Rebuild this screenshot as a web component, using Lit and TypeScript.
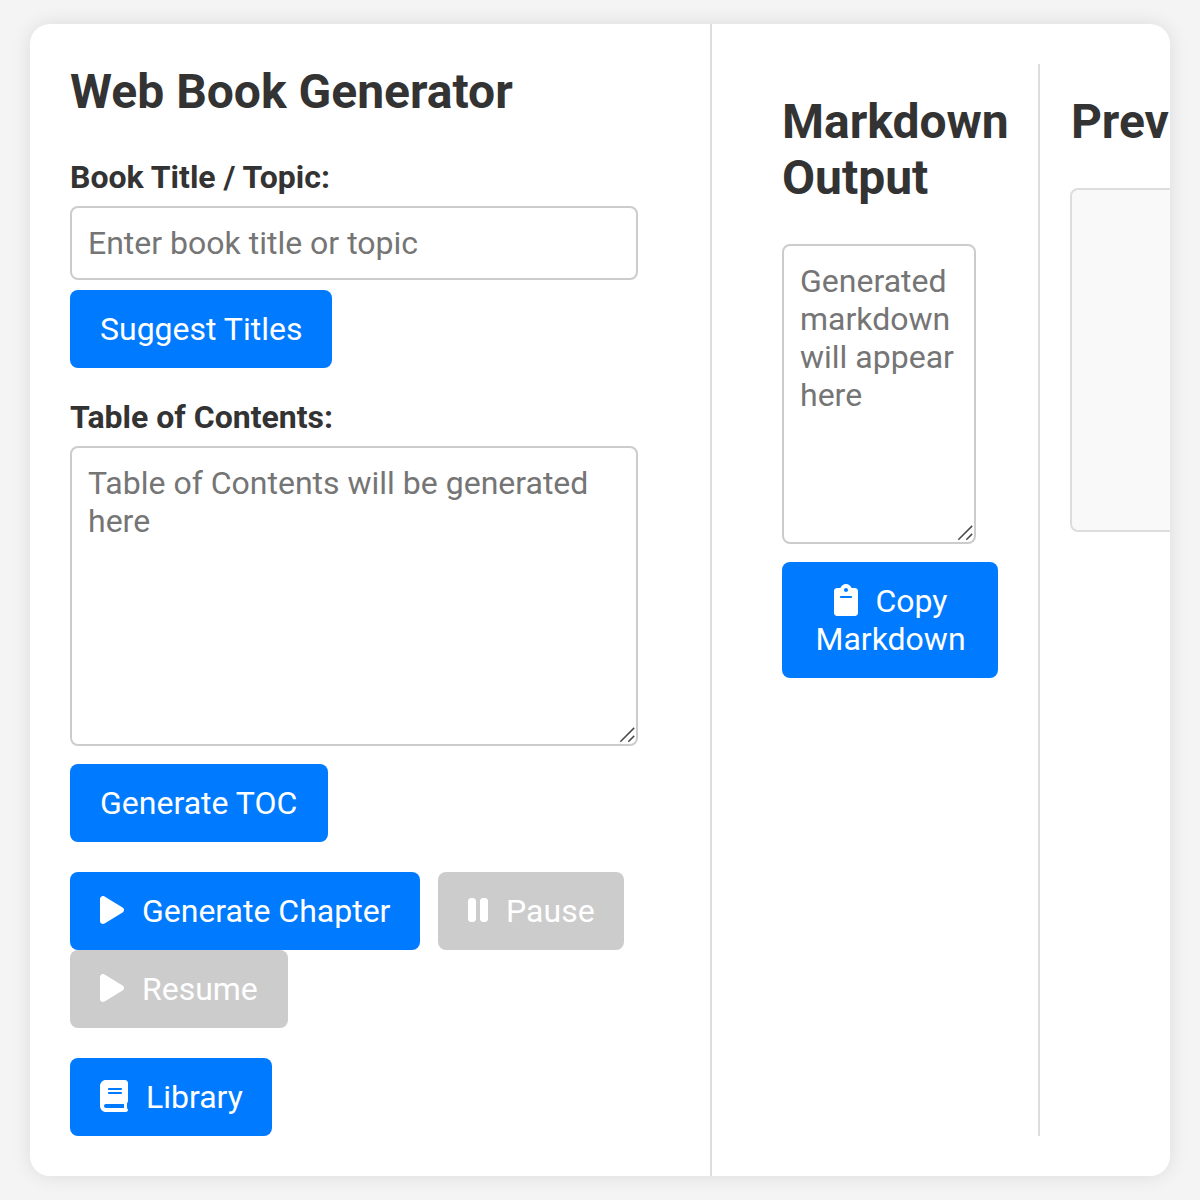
import { LitElement, html, css, svg } from "lit";
import { customElement, property } from "lit/decorators.js";

type IconName = "play" | "pause" | "book" | "clipboard";

const ICONS: Record<IconName, { width: number; path: string }> = {
  play: {
    width: 384,
    path: "M73 39c-14.8-9.1-33.4-9.4-48.5-.9S0 62.6 0 80V432c0 17.4 9.4 33.4 24.5 41.9s33.7 8.1 48.5-.9L361 297c14.3-8.7 23-24.2 23-41s-8.7-32.2-23-41L73 39z",
  },
  pause: {
    width: 320,
    path: "M48 64C21.5 64 0 85.5 0 112V400c0 26.5 21.5 48 48 48H80c26.5 0 48-21.5 48-48V112c0-26.5-21.5-48-48-48H48zm192 0c-26.5 0-48 21.5-48 48V400c0 26.5 21.5 48 48 48h32c26.5 0 48-21.5 48-48V112c0-26.5-21.5-48-48-48H240z",
  },
  book: {
    width: 448,
    path: "M448 336v-288C448 21.49 426.5 0 400 0H96C42.98 0 0 42.98 0 96v320c0 53.02 42.98 96 96 96h320c17.67 0 32-14.33 32-31.1c0-11.72-6.607-21.52-16-27.1v-81.36C441.8 362.8 448 350.2 448 336zM143.1 128h192C344.8 128 352 135.2 352 144C352 152.8 344.8 160 336 160H143.1C135.2 160 128 152.8 128 144C128 135.2 135.2 128 143.1 128zM143.1 192h192C344.8 192 352 199.2 352 208C352 216.8 344.8 224 336 224H143.1C135.2 224 128 216.8 128 208C128 199.2 135.2 192 143.1 192zM384 448H96c-17.67 0-32-14.33-32-32c0-17.67 14.33-32 32-32h288V448z",
  },
  clipboard: {
    width: 384,
    path: "M336 64h-53.88C268.9 26.8 233.7 0 192 0S115.1 26.8 101.9 64H48C21.5 64 0 85.5 0 112v352C0 490.5 21.5 512 48 512h288c26.5 0 48-21.5 48-48v-352C384 85.5 362.5 64 336 64zM192 64c17.67 0 32 14.33 32 32s-14.33 32-32 32S160 113.7 160 96S174.3 64 192 64zM272 224h-160C103.2 224 96 216.8 96 208C96 199.2 103.2 192 112 192h160C280.8 192 288 199.2 288 208S280.8 224 272 224z",
  },
};

const icon = (name: IconName) => html`<svg
  class="icon"
  width=${ICONS[name].width / 16}
  height="32"
  viewBox="0 0 ${ICONS[name].width} 512"
  aria-hidden="true"
>${svg`<path fill="currentColor" d=${ICONS[name].path}></path>`}</svg>`;

/** Multi-line field with a drawn grip in its bottom right corner. */
@customElement("text-area")
class TextArea extends LitElement {
  @property() placeholder = "";

  static styles = css`
    :host {
      display: block;
      position: relative;
      height: 300px;
    }
    .field {
      display: block;
      box-sizing: border-box;
      width: 100%;
      height: 100%;
      margin: 0;
      padding: 16px;
      border: 2px solid #ccc;
      border-radius: 8px;
      background: #fff;
      color: #333;
      font: inherit;
      resize: none;
      overflow: hidden;
      outline: none;
    }
    .field::placeholder {
      color: #757575;
    }
    .grip {
      position: absolute;
      right: 3px;
      bottom: 3px;
    }
  `;

  render() {
    return html`
      <textarea class="field" placeholder=${this.placeholder}></textarea>
      <svg class="grip" width="16" height="16" viewBox="0 0 16 16" aria-hidden="true">
        <path d="M1.3 14.8 15.2 .9M9.3 14.8 15.2 8.9" fill="none" stroke="#4a4a4a" stroke-width="1.5"></path>
      </svg>
    `;
  }
}

@customElement("app-root")
class AppRoot extends LitElement {
  static styles = css`
    :host {
      display: block;
      box-sizing: border-box;
      height: 1200px;
      padding: 24px 30px;
      overflow: hidden;
      background: #f4f4f4;
      color: #333;
      font: 32px/38px Roboto, sans-serif;
    }
    .card {
      display: flex;
      height: 100%;
      border-radius: 20px;
      overflow: hidden;
      background: #fff;
      box-shadow: 0 0 20px rgba(0, 0, 0, 0.1);
    }
    .controls {
      box-sizing: border-box;
      flex: 0 0 682px;
      padding: 40px 72px 40px 40px;
      border-right: 2px solid #ddd;
    }
    .title {
      margin: 0;
      font-size: 48px;
      line-height: 56px;
      font-weight: 700;
    }
    .controls .title {
      margin-bottom: 38px;
    }
    .group {
      display: flex;
      flex-direction: column;
      align-items: flex-start;
      margin-bottom: 30px;
    }
    .label {
      margin-bottom: 10px;
      font-weight: 700;
    }
    .input {
      box-sizing: border-box;
      width: 100%;
      height: 74px;
      margin: 0 0 10px;
      padding: 16px;
      border: 2px solid #ccc;
      border-radius: 8px;
      background: #fff;
      color: #333;
      font: inherit;
      outline: none;
    }
    .input::placeholder {
      color: #757575;
    }
    .toc {
      width: 100%;
      margin-bottom: 18px;
    }
    .actions {
      display: flex;
      flex-wrap: wrap;
      column-gap: 18px;
      margin-bottom: 30px;
    }
    .button {
      margin: 0;
      padding: 20px 30px;
      border: 0;
      border-radius: 8px;
      background: #007bff;
      color: #fff;
      font: inherit;
    }
    .button:disabled {
      background: #ccc;
    }
    .generate,
    .pause,
    .library {
      padding-right: 0;
      text-align: left;
      white-space: nowrap;
    }
    .generate {
      width: 258px;
    }
    .pause {
      width: 186px;
      padding-left: 29.7px;
    }
    .library {
      width: 202px;
    }
    .icon {
      margin-right: 10px;
      vertical-align: -4px;
    }
    .output {
      display: flex;
      flex: 1 0 0;
      min-width: 0;
      padding: 40px 0 40px 40px;
      overflow: hidden;
    }
    .column {
      box-sizing: border-box;
      flex: 0 0 288.4px;
      min-width: 0;
      padding: 30px;
    }
    .markdown {
      border-right: 2px solid #ddd;
    }
    .column .title {
      margin-bottom: 38px;
    }
    .preview-title {
      text-indent: 0.5px;
    }
    .source {
      width: 194px;
      margin-bottom: 18px;
    }
    .copy {
      width: 216px;
      padding-left: 31px;
    }
    .preview {
      box-sizing: border-box;
      height: 344px;
      border: 2px solid #ddd;
      border-radius: 8px;
      background: #f9f9f9;
    }
  `;

  render() {
    return html`
      <main class="card">
        <section class="controls">
          <h1 class="title">Web Book Generator</h1>
          <div class="group">
            <label class="label" for="topic">Book Title / Topic:</label>
            <input class="input" id="topic" type="text" placeholder="Enter book title or topic" />
            <button class="button">Suggest Titles</button>
          </div>
          <div class="group">
            <label class="label">Table of Contents:</label>
            <text-area class="toc" placeholder="Table of Contents will be generated here"></text-area>
            <button class="button generate">Generate TOC</button>
          </div>
          <div class="actions">
            <button class="button">${icon("play")} Generate Chapter</button>
            <button class="button pause" disabled>${icon("pause")} Pause</button>
            <button class="button" disabled>${icon("play")} Resume</button>
          </div>
          <button class="button library">${icon("book")} Library</button>
        </section>
        <section class="output">
          <div class="column markdown">
            <h2 class="title">Markdown Output</h2>
            <text-area class="source" placeholder="Generated markdown will appear here"></text-area>
            <button class="button copy">${icon("clipboard")} Copy Markdown</button>
          </div>
          <div class="column">
            <h2 class="title preview-title">Preview</h2>
            <div class="preview"></div>
          </div>
        </section>
      </main>
    `;
  }
}
